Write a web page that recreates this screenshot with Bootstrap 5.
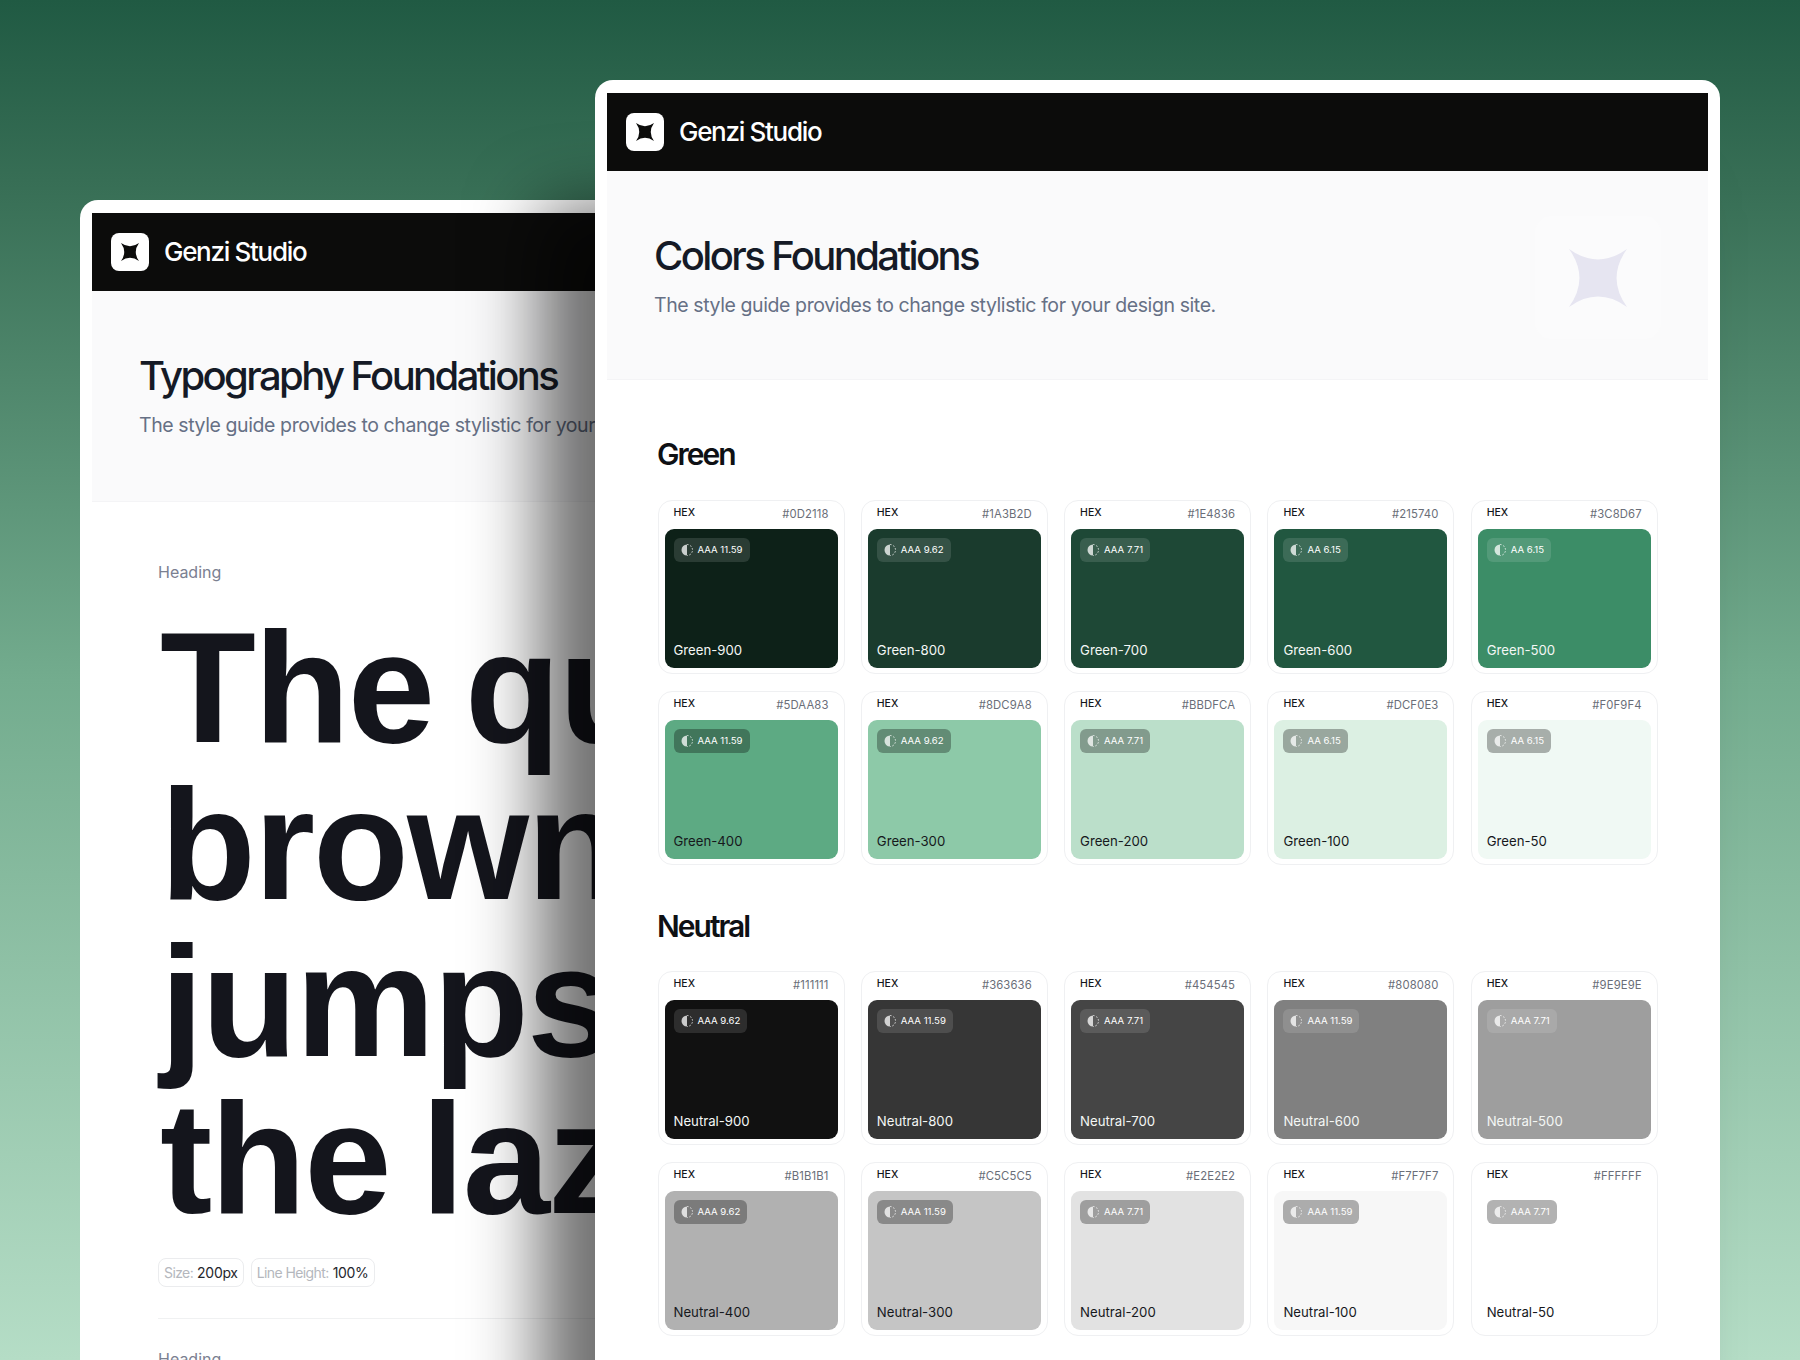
<!DOCTYPE html>
<html lang="en">
<head>
    <meta charset="UTF-8">
    <title>Genzi Studio</title>
    <link href="https://cdn.jsdelivr.net/npm/bootstrap@5.3.0/dist/css/bootstrap.min.css" rel="stylesheet">
    <style>
        html, body { height: 100%; }
        body {
            overflow: hidden;
            position: relative;
            font-family: "Inter", "Liberation Sans", sans-serif;
            background: linear-gradient(180deg, #205a43 0, #376e55 180px, #73ac8e 680px, #b5ddc6 1360px);
        }
        .app-window {
            position: absolute;
            width: 1125px;
            height: 1400px;
            padding: 13px 12px 0;
            background: #fff;
            border-radius: 18px;
        }
        .back-window { left: 80px; top: 200px; }
        .front-window { left: 595px; top: 80px; box-shadow: -56px 125px 70px rgba(0, 0, 0, .56); }
        .top-bar { height: 78px; padding: 0 0 1px 19px; background: #0c0c0b; }
        .logo-tile { width: 38px; height: 38px; border-radius: 8px; background: #fff; }
        .logo-tile svg { width: 18px; height: 18px; fill: #0c0c0b; }
        .brand-name { font-size: 26px; font-weight: 500; letter-spacing: -.05em; color: #fff; margin-left: -1px; }
        .hero-band { position: relative; height: 209px; padding: 61px 0 0 47px; background: #fafafb; border-bottom: 1px solid #f4f4f6; }
        .back-window .hero-band { height: 211px; }
        .hero-title { font-size: 40px; line-height: 48px; font-weight: 500; letter-spacing: -2.6px; color: #151a26; margin: 0 0 11px; }
        .hero-sub { font-size: 19.5px; line-height: 28px; color: #667085; letter-spacing: -.41px; margin: 0; }
        .hero-tile { position: absolute; left: 928px; top: 45px; width: 126px; height: 123px; border-radius: 16px; background: #fbfbfc; }
        .hero-tile svg { width: 58px; height: 58px; fill: #e6e5f1; }
        .palette-body { padding: 56px 0 0 50.5px; }
        .palette-title { font-size: 30px; line-height: 36px; font-weight: 600; letter-spacing: -2px; color: #0e1014; margin: 0 0 28px -.5px; }
        .swatch-grid { display: grid; grid-template-columns: repeat(5, 187px); column-gap: 16.3px; row-gap: 17px; margin-bottom: 43px; }
        .neutral-grid { margin-top: -1px; }
        .swatch-card { height: 174px; padding: 0 6px 6px; border: 1px solid #eff0f2; border-radius: 14px; }
        .swatch-head { height: 28px; padding: 0 9px; }
        .hex-label { font-size: 10.5px; font-weight: 500; color: #14161c; margin-top: 4px; }
        .hex-value { font-size: 11.3px; color: #6a6e78; letter-spacing: .01em; margin-top: 5px; }
        .swatch-fill { height: 139px; padding: 9px 9px 9px; border-radius: 9px; }
        .ratio-tag { height: 24px; padding: 0 7px; border-radius: 6px; font-size: 9.6px; font-weight: 400; gap: 5px; color: #fff; background: rgba(255, 255, 255, .12); }
        .ratio-tag svg { width: 12px; height: 12px; }
        .swatch-fill.is-light .ratio-tag { background: rgba(0, 0, 0, .3); }
        .swatch-name { font-size: 13.2px; line-height: 18px; color: #f4f7f5; }
        .swatch-fill.is-light .swatch-name { color: #16181c; }
        .type-body { padding: 58px 0 0 66px; }
        .type-caption { font-size: 16px; line-height: 24px; color: #7b8091; margin: 0; }
        .type-sample { font-family: "Liberation Sans", sans-serif; font-size: 157px; line-height: 157px; font-weight: 700; letter-spacing: -2px; word-spacing: -10px; color: #14151c; margin: 25px 0 21px 2px; }
        .meta-row { gap: 7px; }
        .meta-pill { height: 29px; padding: 0 5px; border: 1px solid #ebecee; border-radius: 8px; font-size: 14px; letter-spacing: -.6px; color: #b4b7bd; gap: 4px; }
        .meta-pill b { font-weight: 400; letter-spacing: -.3px; color: #25262c; }
        .type-rule { height: 1px; background: #f0f1f2; margin: 31px 0 28px; }
    </style>
</head>
<body>
    <!-- Typography window (behind) -->
    <div class="app-window back-window">
        <div class="top-bar d-flex align-items-center gap-3">
            <div class="logo-tile d-flex align-items-center justify-content-center">
                <svg viewBox="0 0 100 100"><path d="M0 0Q50 36 100 0Q64 50 100 100Q50 64 0 100Q36 50 0 0Z"/></svg>
            </div>
            <span class="brand-name">Genzi Studio</span>
        </div>
        <div class="hero-band">
            <h1 class="hero-title">Typography Foundations</h1>
            <p class="hero-sub">The style guide provides to change stylistic for your design site.</p>
        </div>
        <div class="type-body">
            <p class="type-caption">Heading</p>
            <div class="type-sample">The quick brown fox jumps over the lazy dog</div>
            <div class="meta-row d-flex">
                <div class="meta-pill d-flex align-items-center">Size: <b>200px</b></div>
                <div class="meta-pill d-flex align-items-center">Line Height: <b>100%</b></div>
            </div>
            <div class="type-rule"></div>
            <p class="type-caption">Heading</p>
        </div>
    </div>

    <!-- Colors window (front) -->
    <div class="app-window front-window">
        <div class="top-bar d-flex align-items-center gap-3">
            <div class="logo-tile d-flex align-items-center justify-content-center">
                <svg viewBox="0 0 100 100"><path d="M0 0Q50 36 100 0Q64 50 100 100Q50 64 0 100Q36 50 0 0Z"/></svg>
            </div>
            <span class="brand-name">Genzi Studio</span>
        </div>
        <div class="hero-band">
            <h1 class="hero-title">Colors Foundations</h1>
            <p class="hero-sub">The style guide provides to change stylistic for your design site.</p>
            <div class="hero-tile d-flex align-items-center justify-content-center">
                <svg viewBox="0 0 100 100"><path d="M0 0Q50 36 100 0Q64 50 100 100Q50 64 0 100Q36 50 0 0Z"/></svg>
            </div>
        </div>
        <div class="palette-body">
            <h2 class="palette-title">Green</h2>
            <div class="swatch-grid" id="greenGrid"></div>
            <h2 class="palette-title">Neutral</h2>
            <div class="swatch-grid neutral-grid" id="neutralGrid"></div>
        </div>
    </div>

    <script src="https://cdn.jsdelivr.net/npm/bootstrap@5.3.0/dist/js/bootstrap.bundle.min.js"></script>
    <script>
        const contrastIcon = `<svg viewBox="0 0 12 12"><path d="M6 .5a5.5 5.5 0 0 0 0 11z" fill="currentColor" opacity=".75"/><path d="M6 .5a5.5 5.5 0 0 1 0 11" fill="none" stroke="currentColor" stroke-width="1" stroke-dasharray="1.6 1.6" opacity=".75"/></svg>`;

        const greens = [
            ['Green-900', '#0D2118', 'AAA 11.59'], ['Green-800', '#1A3B2D', 'AAA 9.62'], ['Green-700', '#1E4836', 'AAA 7.71'],
            ['Green-600', '#215740', 'AA 6.15'], ['Green-500', '#3C8D67', 'AA 6.15'],
            ['Green-400', '#5DAA83', 'AAA 11.59', 1], ['Green-300', '#8DC9A8', 'AAA 9.62', 1], ['Green-200', '#BBDFCA', 'AAA 7.71', 1],
            ['Green-100', '#DCF0E3', 'AA 6.15', 1], ['Green-50', '#F0F9F4', 'AA 6.15', 1]
        ];
        const neutrals = [
            ['Neutral-900', '#111111', 'AAA 9.62'], ['Neutral-800', '#363636', 'AAA 11.59'], ['Neutral-700', '#454545', 'AAA 7.71'],
            ['Neutral-600', '#808080', 'AAA 11.59'], ['Neutral-500', '#9E9E9E', 'AAA 7.71'],
            ['Neutral-400', '#B1B1B1', 'AAA 9.62', 1], ['Neutral-300', '#C5C5C5', 'AAA 11.59', 1], ['Neutral-200', '#E2E2E2', 'AAA 7.71', 1],
            ['Neutral-100', '#F7F7F7', 'AAA 11.59', 1], ['Neutral-50', '#FFFFFF', 'AAA 7.71', 1]
        ];

        function renderSwatches(id, items) {
            document.getElementById(id).innerHTML = items.map(([name, hex, ratio, light]) => `
                <div class="swatch-card">
                    <div class="swatch-head d-flex justify-content-between align-items-start">
                        <span class="hex-label">HEX</span>
                        <span class="hex-value">${hex}</span>
                    </div>
                    <div class="swatch-fill d-flex flex-column justify-content-between align-items-start ${light ? 'is-light' : ''}" style="background:${hex}">
                        <div class="ratio-tag d-flex align-items-center">${contrastIcon}<span>${ratio}</span></div>
                        <div class="swatch-name">${name}</div>
                    </div>
                </div>
            `).join('');
        }

        renderSwatches('greenGrid', greens);
        renderSwatches('neutralGrid', neutrals);
    </script>
</body>
</html>
